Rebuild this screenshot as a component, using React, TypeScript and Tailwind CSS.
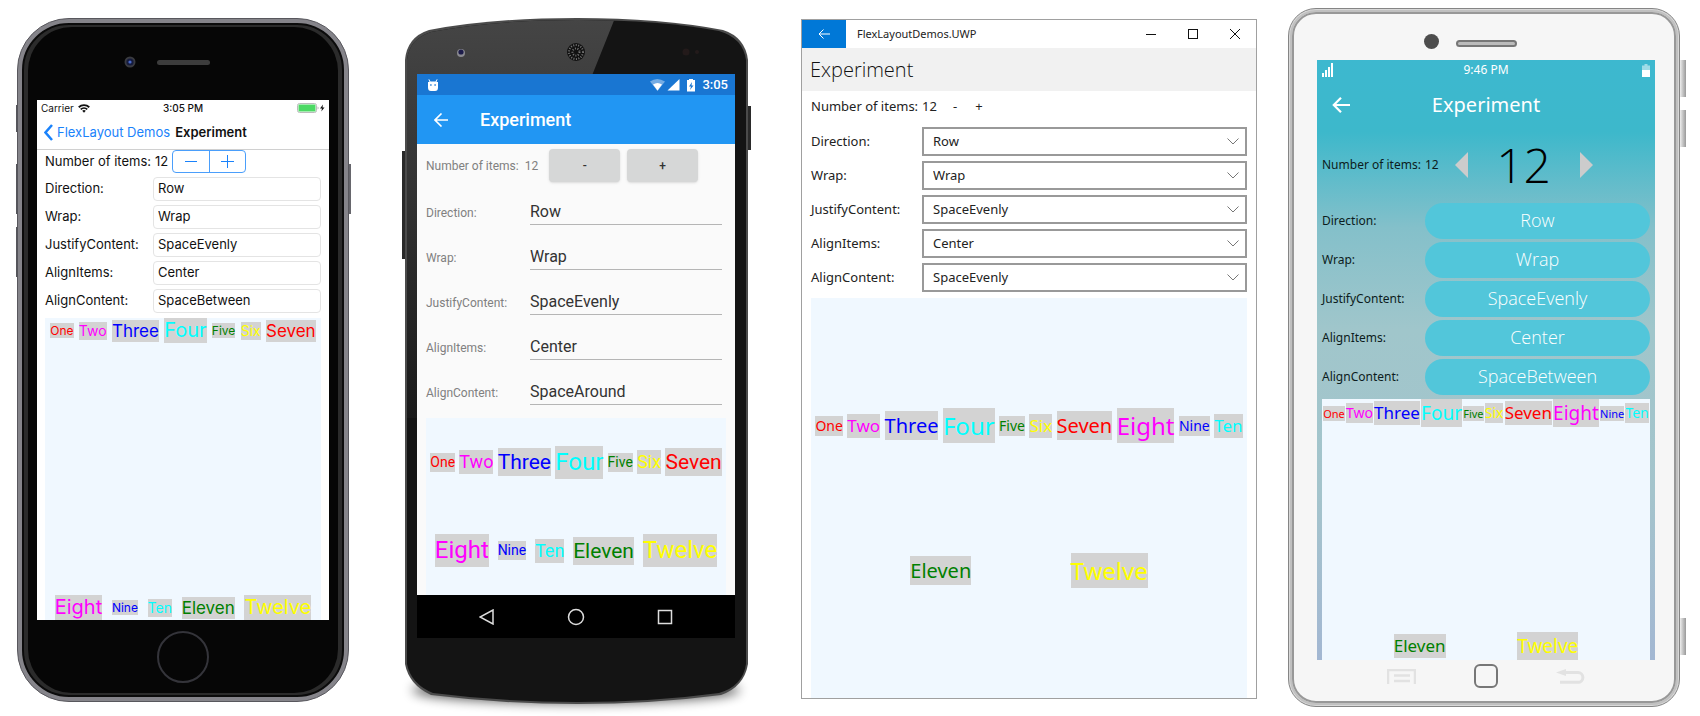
import React from "react";

const values = ["Row", "Wrap", "SpaceEvenly", "Center", "SpaceAround", "SpaceBetween"];
const labels = ["Direction:", "Wrap:", "JustifyContent:", "AlignItems:", "AlignContent:"];
const words = ["One", "Two", "Three", "Four", "Five", "Six", "Seven", "Eight", "Nine", "Ten", "Eleven", "Twelve"];
const colors = ["text-[#ff0000]", "text-[#ff00ff]", "text-[#0000ff]", "text-[#00ffff]", "text-[#008000]", "text-[#ffff00]"];

function Chips({ sizes }: { sizes: string[] }) {
  return (
    <>
      {words.map((w, i) => (
        <span key={w} className={"bg-[#d3d3d3] whitespace-nowrap " + colors[i % 6] + " " + sizes[i % 4]}>
          {w}
        </span>
      ))}
    </>
  );
}

function Pick({ id, value, className }: { id: string; value: string; className: string }) {
  return (
    <select id={id} defaultValue={value} className={"appearance-none outline-none " + className}>
      {values.map((v) => (
        <option key={v}>{v}</option>
      ))}
    </select>
  );
}

function IPhone() {
  const vals = ["Row", "Wrap", "SpaceEvenly", "Center", "SpaceBetween"];
  return (
    <section className="relative flex flex-1 flex-col rounded-[52px] border border-[#58575d] bg-[#85848a] p-1 font-['Inter',sans-serif] text-[#111]">
      <i className="absolute -left-0.5 top-[86px] h-[27px] w-0.5 bg-[#55555b]" />
      <i className="absolute -left-0.5 top-[145px] h-[50px] w-0.5 bg-[#55555b]" />
      <i className="absolute -left-0.5 top-[208px] h-[50px] w-0.5 bg-[#55555b]" />
      <i className="absolute -right-[3px] top-[145px] h-[50px] w-0.5 bg-[#66666c]" />
      <div className="flex flex-1 flex-col rounded-[47px] border-2 border-[#0b0b0b] bg-[#2b2b2b] px-1 py-0.5">
        <div className="flex flex-1 flex-col rounded-[44px] bg-[#060606] px-[9px]">
          <div className="relative flex h-[73px] shrink-0 items-center justify-center pb-0.5">
            <svg className="absolute left-[calc(50%-60px)] top-7" width="14" height="14" viewBox="0 0 14 14">
              <circle cx="7" cy="7" r="5.5" fill="#3a3b40" />
              <circle cx="7" cy="7" r="3.6" fill="#151b3c" />
              <circle cx="7" cy="7" r="1.6" fill="#4767c9" />
            </svg>
            <span className="h-[5px] w-[53px] rounded-full bg-[#3c3c3c]" />
          </div>
          <div className="flex flex-1 flex-col bg-white">
            <div className="grid h-4 grid-cols-3 items-center px-1 text-[10px]">
              <span className="flex items-center gap-1">
                Carrier
                <svg width="12" height="9" viewBox="0 0 24 18" fill="none" stroke="#111" strokeWidth="3.6">
                  <path d="M1.5 6.5a15 15 0 0 1 21 0M5.5 10.8a9.4 9.4 0 0 1 13 0" />
                  <path d="M12 17.5l-3.6-3.8a5.2 5.2 0 0 1 7.2 0z" fill="#111" stroke="none" />
                </svg>
              </span>
              <span className="text-center font-medium">3:05 PM</span>
              <svg className="ml-auto" width="28" height="10" viewBox="0 0 28 10">
                <rect x=".5" y=".5" width="19" height="9" rx="2" fill="#fff" stroke="#bbb" />
                <rect x="1.5" y="1.5" width="17" height="7" rx=".5" fill="#4cd964" />
                <path d="M20.5 3.5v3q1.2-.3 1.2-1.5t-1.2-1.5z" fill="#bbb" />
                <path d="M26 1.5l-3 4h2l-.7 3 3.2-4h-2z" fill="#111" />
              </svg>
            </div>
            <nav className="flex h-[34px] items-center border-b border-[#d0d0d0] pl-[7px] text-[13px]">
              <a href="#demos" className="flex items-center gap-1 text-[#1a82fb]">
                <svg width="9" height="17" viewBox="0 0 9 17" fill="none" stroke="currentColor" strokeWidth="2.5">
                  <path d="M8 1L1.5 8.5 8 16" />
                </svg>
                FlexLayout Demos
              </a>
              <b className="ml-[5px] font-semibold">Experiment</b>
            </nav>
            <div className="flex flex-1 flex-col px-2 text-[13px]">
              <div className="flex h-[23px] items-center">
                <span>Number of items:</span>
                <span className="ml-1">12</span>
                <div className="ml-1 flex h-[23px] w-[74px] rounded-[4px] border border-[#4a9efb] text-[#1a82fb]">
                  <button aria-label="Decrease" className="flex flex-1 items-center justify-center border-r border-[#4a9efb]">
                    <i className="h-px w-3 bg-current" />
                  </button>
                  <button aria-label="Increase" className="flex flex-1 items-center justify-center">
                    <svg width="13" height="13" viewBox="0 0 13 13" stroke="currentColor"><path d="M6.5 0v13M0 6.5h13" /></svg>
                  </button>
                </div>
              </div>
              <div className="mt-1 flex flex-col gap-1">
                {labels.map((l, i) => (
                  <div key={l} className="flex h-6 items-center">
                    <label htmlFor={"ios" + i} className="w-[108px]">{l}</label>
                    <Pick id={"ios" + i} value={vals[i]} className="h-6 min-w-0 flex-1 rounded-[4px] border border-[#e4e4e4] bg-white px-1" />
                  </div>
                ))}
              </div>
              <div className="mt-[5px] flex flex-1 flex-wrap content-between items-center justify-evenly bg-[#f0f8ff]">
                <Chips sizes={["text-[12px] leading-[15px]", "text-[14px] leading-[18px]", "text-[17px] leading-[22px]", "text-[20px] leading-[25px]"]} />
              </div>
            </div>
          </div>
          <div className="flex h-[73px] shrink-0 items-center justify-center">
            <button aria-label="Home" className="size-[52px] rounded-full border-2 border-[#34343a]" />
          </div>
        </div>
      </div>
    </section>
  );
}

function Android() {
  const vals = ["Row", "Wrap", "SpaceEvenly", "Center", "SpaceAround"];
  return (
    <section className="relative flex flex-1 flex-col px-3.5 font-['Roboto',sans-serif]">
      <svg className="absolute inset-0 h-full w-full overflow-visible" viewBox="0 0 346 686" preserveAspectRatio="none">
        <defs>
          <linearGradient id="gloss" x1="0" y1="0" x2="0" y2="1">
            <stop offset="0" stopColor="#454545" />
            <stop offset="1" stopColor="#1a1a1a" />
          </linearGradient>
          <filter id="soft" x="-10%" y="-100%" width="120%" height="300%"><feGaussianBlur stdDeviation="6" /></filter>
          <clipPath id="body"><path d="M4 42Q6 21 28 14Q90 2 174 2Q258 2 316 13Q340 20 343 42V646Q340 668 316 675Q250 684 174 684Q100 684 30 675Q8 666 4 646Z" /></clipPath>
        </defs>
        <ellipse cx="173" cy="672" rx="164" ry="13" fill="#000" opacity=".65" filter="url(#soft)" />
        <rect x="-1" y="133" width="4" height="108" fill="#2a2a2a" />
        <rect x="343" y="88" width="5" height="44" fill="#2a2a2a" />
        <path d="M2 42Q4 19 26 12Q90 0 174 0Q258 0 320 12Q342 19 345 42V646Q341 669 318 677Q250 686 174 686Q100 686 28 677Q6 667 2 646Z" fill="#4b4b4b" />
        <g clipPath="url(#body)">
          <rect width="346" height="686" fill="#141414" />
          <path d="M0 0H212L168 110V400H0Z" fill="url(#gloss)" />
        </g>
        <circle cx="58" cy="35" r="4" fill="#8a8a90" /><circle cx="58" cy="34" r="2.6" fill="#1d1c4a" />
        <circle cx="173" cy="34" r="9" fill="#111" />
        <circle cx="173" cy="34" r="7" fill="none" stroke="#777" strokeWidth="2" strokeDasharray="1 1.5" />
        <circle cx="173" cy="34" r="3.5" fill="none" stroke="#777" strokeWidth="2" strokeDasharray="1 1.5" />
        <circle cx="283" cy="34" r="3.5" fill="#231a1a" /><circle cx="294" cy="34" r="2" fill="#231a1a" />
      </svg>
      <div className="relative mt-14 flex flex-1 flex-col bg-[#fafafa]">
        <div className="flex h-[21px] items-center bg-[#1976d2] pl-2.5 pr-[7px] text-white">
          <svg width="12" height="12" viewBox="0 0 12 12" fill="#fff">
            <path d="M2 0l1.5 2.5h5L10 0l.5.5L9.5 3H11v5.5Q11 12 8 12H4Q1 12 1 8.5V3h1.5L1.5.5z" />
            <path d="M3.2 6h1.4M7.4 6h1.4" stroke="#1976d2" strokeWidth="1.4" />
          </svg>
          <svg className="ml-auto" width="46" height="14" viewBox="0 0 46 14">
            <path d="M0 3.5Q7 -1.5 15 3.5L7.5 13Z" fill="#fff" opacity=".4" />
            <path d="M3 6.5Q7.5 3.5 12 6.5L7.5 12.5Z" fill="#fff" />
            <path d="M29.5 1V12.5H17.5Z" fill="#fff" />
            <path d="M39 1h4v1h2v11.5h-8V2h2z" fill="#fff" />
            <path d="M42 4l-3 4.5h2L40 12l3.500-4.5h-2z" fill="#1976d2" />
          </svg>
          <span className="ml-1.5 text-[13px] font-medium">3:05</span>
        </div>
        <header className="flex h-[49px] items-center bg-[#2196f3] pl-[17px] text-white">
          <button aria-label="Back">
            <svg width="14" height="14" viewBox="0 0 14 14" fill="none" stroke="currentColor" strokeWidth="1.6"><path d="M14 7H1M7.5.5L1 7l6.5 6.5" /></svg>
          </button>
          <h2 className="ml-8 text-[18px] font-medium">Experiment</h2>
        </header>
        <div className="flex flex-1 flex-col px-[9px] text-[12px] text-[#808080]">
          <div className="flex h-[46px] items-start pt-[5px] leading-[34px]">
            <span>Number of items:</span>
            <span className="ml-1.5">12</span>
            <button className="ml-[11px] h-[33px] w-[71px] rounded-sm bg-[#d6d7d7] font-medium text-[#333] shadow-sm">-</button>
            <button className="ml-[7px] h-[33px] w-[71px] rounded-sm bg-[#d6d7d7] font-medium text-[#333] shadow-sm">+</button>
          </div>
          {labels.map((l, i) => (
            <div key={l} className="flex h-[45px] items-center">
              <label htmlFor={"and" + i} className="w-[104px]">{l}</label>
              <Pick id={"and" + i} value={vals[i]} className="mr-1 h-[25px] min-w-0 flex-1 border-b border-[#b5b5b5] text-[16px] text-[#333]" />
            </div>
          ))}
          <div className="mt-[3px] flex flex-1 flex-wrap content-around items-center justify-evenly bg-[#f0f8ff]">
            <Chips sizes={["text-[14px] leading-[19px]", "text-[18px] leading-[24px]", "text-[21px] leading-[28px]", "text-[24px] leading-[33px]"]} />
          </div>
        </div>
        <div className="flex h-[43px] items-center justify-between bg-black px-[62px]">
          <button aria-label="Back"><svg width="16" height="16" viewBox="0 0 16 16" fill="none" stroke="#ddd" strokeWidth="1.5"><path d="M14 1v14L1 8z" /></svg></button>
          <button aria-label="Home"><svg width="18" height="18" viewBox="0 0 18 18" fill="none" stroke="#ddd" strokeWidth="1.5"><circle cx="9" cy="9" r="7.5" /></svg></button>
          <button aria-label="Recent"><svg width="16" height="16" viewBox="0 0 16 16" fill="none" stroke="#ddd" strokeWidth="1.5"><rect x="1.5" y="1.5" width="13" height="13" /></svg></button>
        </div>
      </div>
      <div className="h-[66px] shrink-0" />
    </section>
  );
}

function Uwp() {
  const vals = ["Row", "Wrap", "SpaceEvenly", "Center", "SpaceEvenly"];
  return (
    <section className="flex flex-1 flex-col border border-[#a0a0a0] bg-white font-['Noto_Sans',sans-serif] text-[#222]">
      <div className="flex h-[28px] items-center text-[11px]">
        <button aria-label="Back" className="flex h-full w-11 items-center justify-center bg-[#0078d7]">
          <svg width="12" height="10" viewBox="0 0 12 10" fill="none" stroke="#fff"><path d="M12 5H1M5.5.5L1 5l4.5 4.5" /></svg>
        </button>
        <span className="ml-[11px] mr-auto">FlexLayoutDemos.UWP</span>
        <div className="flex gap-8 pr-4">
          <button aria-label="Minimize"><svg width="10" height="10" stroke="#111"><path d="M0 5.5h10" /></svg></button>
          <button aria-label="Maximize"><svg width="10" height="10" stroke="#111" fill="none"><rect x=".5" y=".5" width="9" height="9" /></svg></button>
          <button aria-label="Close"><svg width="10" height="10" stroke="#111"><path d="M0 0l10 10M10 0L0 10" /></svg></button>
        </div>
      </div>
      <h2 className="flex h-[43px] items-center bg-[#f1f1f1] pl-2 font-['Open_Sans',sans-serif] text-[20px] font-light text-[#111]">Experiment</h2>
      <div className="flex flex-1 flex-col px-[9px] text-[13px]">
        <div className="flex h-[31px] items-center">
          <span>Number of items:</span>
          <span className="ml-1">12</span>
          <button className="ml-1.5 w-6">-</button>
          <button className="w-6">+</button>
        </div>
        <div className="mt-[5px] flex flex-col gap-[5px]">
          {labels.map((l, i) => (
            <div key={l} className="flex h-[29px] items-center">
              <label htmlFor={"uwp" + i} className="w-[111px]">{l}</label>
              <div className="relative h-full min-w-0 flex-1">
                <Pick id={"uwp" + i} value={vals[i]} className="h-full w-full border-2 border-[#999] bg-white px-[9px]" />
                <svg className="pointer-events-none absolute right-2 top-[11px]" width="12" height="7" viewBox="0 0 12 7" fill="none" stroke="#777"><path d="M.5.5L6 6 11.5.5" /></svg>
              </div>
            </div>
          ))}
        </div>
        <div className="mt-1.5 flex flex-1 flex-wrap content-evenly items-center justify-evenly bg-[#f0f8ff]">
          <Chips sizes={["text-[14px] leading-[20px]", "text-[17px] leading-[24px]", "text-[20px] leading-[29px]", "text-[24px] leading-[35px]"]} />
        </div>
      </div>
    </section>
  );
}

function Tizen() {
  const vals = ["Row", "Wrap", "SpaceEvenly", "Center", "SpaceBetween"];
  return (
    <section className="relative mr-[6px] flex flex-1 flex-col rounded-[28px] border border-[#858585] bg-[#d8d8d8] p-px font-['Noto_Sans',sans-serif]">
      <i className="absolute -right-[7px] top-[51px] h-[37px] w-1.5 bg-gradient-to-r from-[#eee] to-[#999]" />
      <i className="absolute -right-[7px] top-[101px] h-[37px] w-1.5 bg-gradient-to-r from-[#eee] to-[#999]" />
      <i className="absolute -right-[7px] bottom-[51px] h-[37px] w-1.5 bg-gradient-to-r from-[#eee] to-[#999]" />
      <div className="flex flex-1 flex-col rounded-[26px] border-2 border-[#c0c0c0] bg-[#f6f6f6]">
        <div className="flex flex-1 flex-col rounded-[24px] border-2 border-[#989898] pt-px pl-[23px] pr-[19px]">
          <div className="relative flex h-[45px] shrink-0 items-center justify-center pt-3">
            <i className="absolute left-[calc(50%-62px)] top-[19px] size-[15px] rounded-full bg-[#4d4d4d]" />
            <i className="h-[7px] w-[61px] rounded-full border-2 border-[#777] bg-[#bbb]" />
          </div>
          <div className="flex flex-1 flex-col bg-linear-[180deg,#3db8cf_0%,#3db8cb_12%,#84c0ca_28%,#a0c6cb_45%,#a4c4cc_72%,#a3b7d2_100%]">
            <div className="grid h-5 grid-cols-3 items-center px-[5px] text-[12px] text-white">
              <svg width="11" height="14" viewBox="0 0 11 14" fill="#fff"><path d="M0 10h2v4H0zM3 7h2v7H3zM6 4h2v10H6zM9 0h2v14H9z" /></svg>
              <span className="text-center">9:46 PM</span>
              <svg className="ml-auto" width="8" height="13" viewBox="0 0 8 13" fill="#fff"><path d="M2.5 0h3v1.5H8V6H0V1.5h2.5z" opacity=".5" /><path d="M0 6h8v7H0z" /></svg>
            </div>
            <header className="grid h-[50px] grid-cols-[1fr_auto_1fr] items-center px-[15px] text-white">
              <button aria-label="Back" className="justify-self-start">
                <svg width="18" height="16" viewBox="0 0 18 16" fill="none" stroke="#fff" strokeWidth="2.2"><path d="M18 8H2M9 .8L1.8 8 9 15.2" /></svg>
              </button>
              <h2 className="text-[20px]">Experiment</h2>
            </header>
            <div className="flex flex-1 flex-col px-[5px] text-[12px] text-[#0c1c20]">
              <div className="flex h-[70px] items-center">
                <span>Number of items:</span>
                <span className="ml-1">12</span>
                <button aria-label="Decrease" className="ml-4"><svg width="13" height="26" fill="#ccc"><path d="M13 0v26L0 13z" /></svg></button>
                <span className="w-28 text-center font-['Open_Sans',sans-serif] text-[48px] font-light text-black">12</span>
                <button aria-label="Increase"><svg width="13" height="26" fill="#ccc"><path d="M0 0v26l13-13z" /></svg></button>
              </div>
              <div className="mt-[3px] flex flex-col gap-[3px]">
                {labels.map((l, i) => (
                  <div key={l} className="flex h-9 items-center">
                    <label htmlFor={"tiz" + i} className="w-[103px]">{l}</label>
                    <Pick id={"tiz" + i} value={vals[i]} className="h-9 min-w-0 flex-1 rounded-full bg-[#52c6da] pb-0.5 text-center font-['Open_Sans',sans-serif] text-[18px] font-light text-white" />
                  </div>
                ))}
              </div>
              <div className="mt-1 flex flex-1 flex-wrap content-between items-center justify-evenly bg-[#f0f8ff]">
                <Chips sizes={["text-[11px] leading-[15px]", "text-[14px] leading-[20px]", "text-[17px] leading-[24px]", "text-[19px] leading-[28px]"]} />
              </div>
            </div>
          </div>
          <div className="flex h-[41px] shrink-0 items-start justify-center gap-[58px] pt-1">
            <button aria-label="Menu" className="mt-[5px]"><svg width="29" height="15" viewBox="0 0 29 15" fill="none" stroke="#e2e2e2" strokeWidth="2.5"><path d="M1 15V1h27v14M7 6.5h16M7 12h16" /></svg></button>
            <button aria-label="Home" className="size-6 rounded-[6px] border-2 border-[#777]" />
            <button aria-label="Back" className="mt-[5px]"><svg width="29" height="15" viewBox="0 0 29 15" fill="none" stroke="#e2e2e2" strokeWidth="3"><path d="M8 3.5h14a4.8 4.8 0 0 1 0 9.8H4" /><path d="M0 3.5L10 0v7z" fill="#e2e2e2" stroke="none" /></svg></button>
          </div>
        </div>
      </div>
    </section>
  );
}

export default function App() {
  return (
    <main className="grid min-h-screen grid-cols-[380fr_400fr_490fr_430fr] bg-white">
      <div className="flex min-w-0 pb-3.5 pl-[17px] pr-[31px] pt-[18px]"><IPhone /></div>
      <div className="flex min-w-0 pb-3 pl-[23px] pr-[31px] pt-[18px]"><Android /></div>
      <div className="flex min-w-0 pb-[17px] pl-[21px] pr-[13px] pt-[19px]"><Uwp /></div>
      <div className="flex min-w-0 pb-[9px] pl-[18px] pr-[14px] pt-2"><Tizen /></div>
    </main>
  );
}
